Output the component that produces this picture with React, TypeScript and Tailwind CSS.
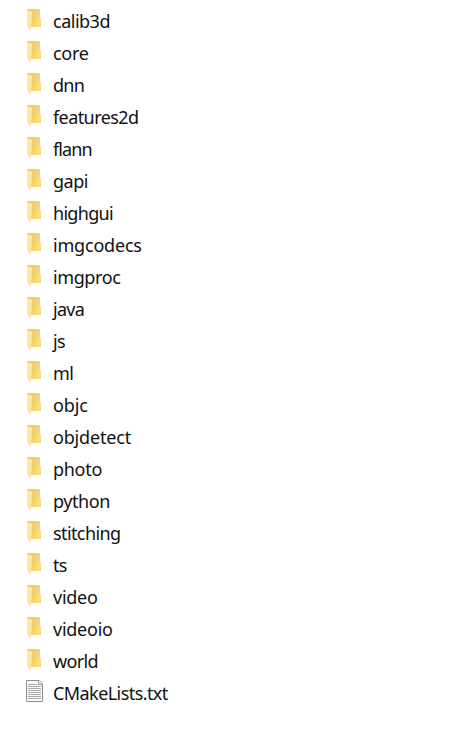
type Entry = {
  name: string;
  type?: 'folder' | 'file';
  tracking?: string;
};

const entries: Entry[] = [
  { name: 'calib3d', tracking: 'tracking-[-0.5px]' },
  { name: 'core' },
  { name: 'dnn', tracking: 'tracking-[-0.7px]' },
  { name: 'features2d', tracking: 'tracking-[-0.58px]' },
  { name: 'flann', tracking: 'tracking-[-0.9px]' },
  { name: 'gapi', tracking: 'tracking-[-0.5px]' },
  { name: 'highgui', tracking: 'tracking-[-0.7px]' },
  { name: 'imgcodecs', tracking: 'tracking-[-0.2px]' },
  { name: 'imgproc', tracking: 'tracking-[-0.4px]' },
  { name: 'java', tracking: 'tracking-[-0.7px]' },
  { name: 'js', tracking: 'tracking-[-0.6px]' },
  { name: 'ml', tracking: 'tracking-[-0.7px]' },
  { name: 'objc', tracking: 'tracking-[-0.1px]' },
  { name: 'objdetect', tracking: 'tracking-[-0.18px]' },
  { name: 'photo', tracking: 'tracking-[-0.3px]' },
  { name: 'python', tracking: 'tracking-[-0.45px]' },
  { name: 'stitching', tracking: 'tracking-[-0.6px]' },
  { name: 'ts', tracking: 'tracking-[-0.8px]' },
  { name: 'video', tracking: 'tracking-[-0.25px]' },
  { name: 'videoio', tracking: 'tracking-[-0.25px]' },
  { name: 'world', tracking: 'tracking-[-0.65px]' },
  { name: 'CMakeLists.txt', type: 'file', tracking: 'tracking-[-0.57px]' },
];

function FolderIcon() {
  return (
    <svg width="18" height="24" viewBox="0 0 18 24" className="shrink-0">
      <defs>
        <linearGradient id="folder-back" x1="0" y1="0" x2="1" y2="0.4">
          <stop offset="0.3" stopColor="#ebc96b" />
          <stop offset="1" stopColor="#fbdb7c" />
        </linearGradient>
      </defs>
      <path d="M1.2 2H14v9l1 1.6V20H5z" fill="url(#folder-back)" />
      <path d="M1 2.2l5 3.1-.7 16.2-.6 1.4L1 20.6z" fill="#ffe8a2" />
    </svg>
  );
}

function FileIcon() {
  return (
    <svg width="18" height="24" viewBox="0 0 18 24" className="shrink-0">
      <path d="M.5 1.5h12.7l3.3 3.5v17.5H.5z" fill="#fafafa" stroke="#8c8c8c" />
      <path d="M12.5 1.5v4h4" fill="#e6e6e6" stroke="#9a9a9a" />
      <path
        d="M2 5.5h9M2 7.5h13M2 9.5h13M2 11.5h13M2 13.5h13M2 15.5h13M2 17.5h13M2 19.5h13"
        stroke="#a8a8a8"
      />
    </svg>
  );
}

export default function App() {
  return (
    <div className="h-[735px] w-[454px] overflow-hidden bg-white pt-[5px] pl-[26px] font-['Noto_Sans',sans-serif] text-[18px] text-[#111]">
      <ul>
        {entries.map(({ name, type = 'folder', tracking = 'tracking-[-0.3px]' }) => (
          <li key={name} className="flex h-8 items-start gap-[9px]">
            <div className="pt-[2px]">
              {type === 'folder' ? <FolderIcon /> : <FileIcon />}
            </div>
            <span className={`leading-8 whitespace-nowrap ${tracking}`}>{name}</span>
          </li>
        ))}
      </ul>
    </div>
  );
}
